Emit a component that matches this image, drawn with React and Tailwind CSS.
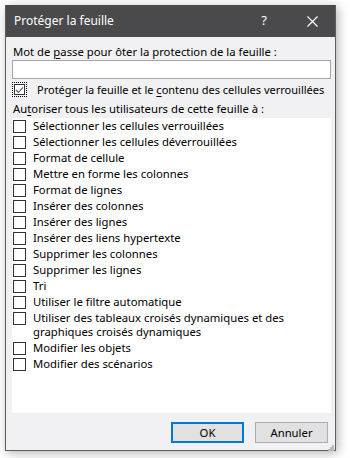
import React from "react";

const FONT = { fontFamily: '"Noto Sans", "Open Sans", "Liberation Sans", sans-serif' };

const options = [
  "Sélectionner les cellules verrouillées",
  "Sélectionner les cellules déverrouillées",
  "Format de cellule",
  "Mettre en forme les colonnes",
  "Format de lignes",
  "Insérer des colonnes",
  "Insérer des lignes",
  "Insérer des liens hypertexte",
  "Supprimer les colonnes",
  "Supprimer les lignes",
  "Tri",
  "Utiliser le filtre automatique",
  "Utiliser des tableaux croisés dynamiques et des graphiques croisés dynamiques",
  "Modifier les objets",
  "Modifier des scénarios",
];

function Box() {
  return <span className="mt-[1px] h-[13px] w-[13px] shrink-0 border border-[#333333] bg-white" />;
}

export default function App() {
  return (
    <div className="min-h-[458px] w-[350px] bg-white pl-[5px] pt-[5px]" style={FONT}>
      <div className="flex h-[446px] w-[331px] flex-col border border-t-0 border-[#5d5d5f] bg-[#f1f0f3] shadow-[2px_2px_10px_rgba(0,0,0,0.3)]">
        {/* Title bar */}
        <div className="flex h-[32px] shrink-0 items-center bg-[#4a494c] pl-[8px] text-[12px] text-white">
          <span className="flex-1">Protéger la feuille</span>
          <span className="mr-[40px] text-[13px]">?</span>
          <svg width="11" height="11" viewBox="0 0 11 11" className="mr-[17px]">
            <path d="M0.5 0.5 L10.5 10.5 M10.5 0.5 L0.5 10.5" stroke="white" strokeWidth="1.2" />
          </svg>
        </div>

        {/* Body */}
        <div className="flex flex-1 flex-col px-[6px] pt-[7px] text-[11.3px] leading-[15px] text-black">
          <div className="pl-[1px]">
            Mot de <u className="underline-offset-2">p</u>asse pour ôter la protection de la feuille :
          </div>
          <div className="mt-[1px] h-[19px] w-[319px] shrink-0 border border-[#a5a5a5] bg-white" />

          <div className="mt-[3px] flex items-center whitespace-nowrap">
            <span className="border border-dotted border-black p-[1px]">
              <span className="flex h-[11px] w-[11px] items-center justify-center border border-[#333] bg-white">
                <svg width="10" height="10" viewBox="0 0 10 10">
                  <path d="M1 5 L3.8 7.8 L9 2" fill="none" stroke="#666" strokeWidth="1.3" />
                </svg>
              </span>
            </span>
            <span className="ml-[10px] text-[11px]">
              Protéger la feuille et le <u className="underline-offset-2">c</u>ontenu des cellules verrouillées
            </span>
          </div>

          <div className="mt-[4px] pl-[1px]">
            Au<u className="underline-offset-2">t</u>oriser tous les utilisateurs de cette feuille à :
          </div>

          <div className="mt-[2px] h-[295px] w-[319px] shrink-0 bg-white">
            {options.map((o) => (
              <div key={o} className="flex items-start gap-[7px] py-[1px] pl-[1px] pr-[12px] leading-[14px]">
                <Box />
                <span>{o}</span>
              </div>
            ))}
          </div>

          {/* Buttons */}
          <div className="mt-[9px] flex justify-end gap-[11px] pr-[1px]">
            <button className="h-[21px] w-[73px] border-2 border-[#0078d7] bg-[#e1e1e1] text-[11.3px]">
              OK
            </button>
            <button className="h-[21px] w-[73px] border border-[#adadad] bg-[#e1e1e1] text-[11.3px]">
              Annuler
            </button>
          </div>
          <div className="mt-[2px] flex justify-end">
            <svg width="6" height="6" viewBox="0 0 6 6" className="-mr-[5px]">
              <rect x="4" y="0" width="2" height="2" fill="#b8b8b8" />
              <rect x="2" y="2" width="2" height="2" fill="#b8b8b8" />
              <rect x="4" y="2" width="2" height="2" fill="#b8b8b8" />
              <rect x="0" y="4" width="2" height="2" fill="#b8b8b8" />
              <rect x="2" y="4" width="2" height="2" fill="#b8b8b8" />
              <rect x="4" y="4" width="2" height="2" fill="#b8b8b8" />
            </svg>
          </div>
        </div>
      </div>
    </div>
  );
}
